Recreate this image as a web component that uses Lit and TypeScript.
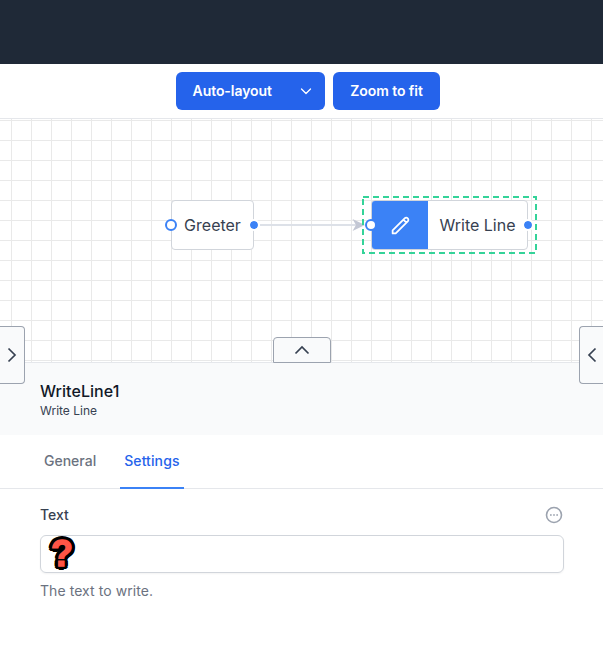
import { LitElement, html, css } from "lit";
import { customElement } from "lit/decorators.js";

@customElement("app-root")
export class AppRoot extends LitElement {
  static styles = css`
    :host {
      display: flex;
      flex-direction: column;
      position: relative;
      height: 645px;
      overflow: hidden;
      background: #fff;
      color: #374151;
      font-family: Inter, "Liberation Sans", sans-serif;
      font-size: 14px;
      line-height: 20px;
    }
    * { box-sizing: border-box; }
    svg { display: block; fill: none; flex: none; }
    .header { height: 64px; flex: none; background: #1f2937; }
    .toolbar {
      height: 55px;
      flex: none;
      display: flex;
      justify-content: center;
      gap: 8px;
      padding: 8px 0;
      padding-left: 13px;
      border-bottom: 1px solid #e5e7eb;
    }
    .btn {
      display: flex;
      align-items: center;
      height: 38px;
      border: 0;
      border-radius: 6px;
      background: #2563eb;
      color: #fff;
      font: 600 14px/20px Inter, "Liberation Sans", sans-serif;
      letter-spacing: -0.06px;
      padding: 0;
    }
    .split { width: 149px; padding: 0 13px 0 16.5px; justify-content: space-between; }
    .zoom { width: 107px; justify-content: center; }
    .canvas {
      position: relative;
      height: 243px;
      flex: none;
      background-image: linear-gradient(to right, #e9e9e9 1px, transparent 1px),
        linear-gradient(to bottom, #e9e9e9 1px, transparent 1px);
      background-size: 20px 20px;
      background-position: 11px 1px;
    }
    .edge { position: absolute; left: 254px; top: 98px; }
    .node {
      position: absolute;
      top: 81px;
      height: 50px;
      display: flex;
      align-items: center;
      border: 1px solid #d1d5db;
      border-radius: 4px;
      background: #fff;
      font-size: 16px;
      line-height: 24px;
      white-space: nowrap;
    }
    .greeter { left: 171px; width: 83px; justify-content: center; }
    .write { left: 371px; width: 157px; }
    .label { flex: 1; text-align: center; }
    .badge {
      width: 56px;
      height: 48px;
      display: flex;
      align-items: center;
      justify-content: center;
      border-radius: 3px 0 0 3px;
      background: #3b82f6;
    }
    .selection { position: absolute; left: 362px; top: 77px; }
    .port { position: absolute; width: 12px; height: 12px; border-radius: 50%; top: 18px; }
    .in { left: -7px; border: 2px solid #3b82f6; background: #fff; }
    .port.out {
      box-sizing: content-box;
      width: 8px;
      height: 8px;
      top: 18px;
      right: -7px;
      border: 2px solid #fff;
      background: #3b82f6;
      background-clip: padding-box;
    }
    .handle {
      position: absolute;
      display: flex;
      align-items: center;
      justify-content: center;
      border: 1px solid #9ca3af;
      background: #f9fafb;
      z-index: 2;
    }
    .left { left: 0; top: 326px; width: 25px; height: 58px; border-left: 0; border-radius: 0 4px 4px 0; }
    .right { right: 0; top: 326px; width: 24px; height: 58px; border-right: 0; border-radius: 4px 0 0 4px; }
    .bottom { left: 273px; top: 337px; width: 58px; height: 26px; border-radius: 4px 4px 0 0; }
    .summary {
      height: 73px;
      flex: none;
      padding: 18px 40px 0;
      border-top: 1px solid #e5e7eb;
      background: #f9fafb;
    }
    .title { font-size: 16px; line-height: 20px; font-weight: 500; letter-spacing: 0.06px; color: #111827; }
    .type { font-size: 12px; line-height: 18px; padding-top: 1px; }
    .tabs {
      display: flex;
      gap: 20px;
      height: 54px;
      flex: none;
      padding: 0 40px;
      border-bottom: 1px solid #e5e7eb;
      font-weight: 500;
    }
    .tab { height: 54px; padding: 16px 4px 0; color: #6b7280; }
    .active { color: #2563eb; border-bottom: 2px solid #3b82f6; letter-spacing: 0.1px; }
    .form { padding: 16px 39px 0 40px; }
    .row { display: flex; justify-content: space-between; align-items: center; height: 20px; font-weight: 500; }
    .field {
      height: 38px;
      margin: 10px 0 8px;
      padding: 0 0 0 10px;
      border: 1px solid #d1d5db;
      border-radius: 6px;
      box-shadow: 0 1px 2px rgba(0, 0, 0, 0.05);
    }
    .mark {
      display: block;
      font: 700 36px/36px "Liberation Sans", sans-serif;
      color: #ff5546;
      -webkit-text-stroke: 1.4px #ff5546;
      text-shadow: 4px 0 #000, -4px 0 #000, 0 4px #000, 0 -4px #000,
        2.8px 2.8px #000, -2.8px 2.8px #000, 2.8px -2.8px #000, -2.8px -2.8px #000,
        3.7px 1.5px #000, -3.7px 1.5px #000, 3.7px -1.5px #000, -3.7px -1.5px #000,
        2px 0 #000, -2px 0 #000, 0 2px #000, 0 -2px #000;
    }
    .hint { color: #6b7280; letter-spacing: 0.06px; }
  `;

  render() {
    return html`
      <div class="header"></div>
      <div class="toolbar">
        <button class="btn split">
          Auto-layout
          <svg width="12" height="12" stroke="#fff" stroke-width="1.3" stroke-linecap="round" stroke-linejoin="round"><path d="M1.5 4 6 8.5 10.5 4" /></svg>
        </button>
        <button class="btn zoom">Zoom to fit</button>
      </div>
      <div class="canvas">
        <svg class="edge" width="114" height="16">
          <path d="M6 8H104" stroke="#dde1e8" stroke-width="2" />
          <path d="M98.500 2 111 8 98.500 14 102 8Z" fill="#c3c7d4" />
        </svg>
        <div class="node greeter">
          Greeter
          <span class="port in"></span><span class="port out"></span>
        </div>
        <svg class="selection" width="175" height="58">
          <rect x="1" y="1" width="173" height="56" stroke="#34d399" stroke-width="2" stroke-dasharray="6 4" />
        </svg>
        <div class="node write">
          <span class="badge">
            <svg width="21" height="21" viewBox="0 0 24 24" stroke="#fff" stroke-width="2" stroke-linecap="round" stroke-linejoin="round">
              <path d="M15.232 5.232l3.536 3.536M16.732 3.732a2.500 2.500 0 1 1 3.536 3.536L6.500 21.036H3v-3.572L16.732 3.732z" />
            </svg>
          </span>
          <span class="label">Write Line</span>
          <span class="port in"></span><span class="port out"></span>
        </div>
      </div>
      <div class="handle left">
        <svg width="10" height="16" stroke="#374151" stroke-width="1.7"><path d="M1.500 1.500 8 8 1.500 14.500" /></svg>
      </div>
      <div class="handle right">
        <svg width="10" height="16" stroke="#374151" stroke-width="1.7"><path d="M8.500 1.500 2 8 8.500 14.500" /></svg>
      </div>
      <div class="handle bottom">
        <svg width="16" height="10" stroke="#374151" stroke-width="1.7"><path d="M1.500 8.500 8 2 14.500 8.500" /></svg>
      </div>
      <div class="summary">
        <div class="title">WriteLine1</div>
        <div class="type">Write Line</div>
      </div>
      <div class="tabs">
        <div class="tab">General</div>
        <div class="tab active">Settings</div>
      </div>
      <div class="form">
        <div class="row">
          <span>Text</span>
          <svg width="20" height="20"><circle cx="10" cy="10" r="7.500" stroke="#9ca3af" stroke-width="1.600" /><path d="M6 10h1.700M9.150 10h1.700M12.300 10h1.700" stroke="#9ca3af" stroke-width="1.700" /></svg>
        </div>
        <div class="field"><span class="mark">?</span></div>
        <div class="hint">The text to write.</div>
      </div>
    `;
  }
}
